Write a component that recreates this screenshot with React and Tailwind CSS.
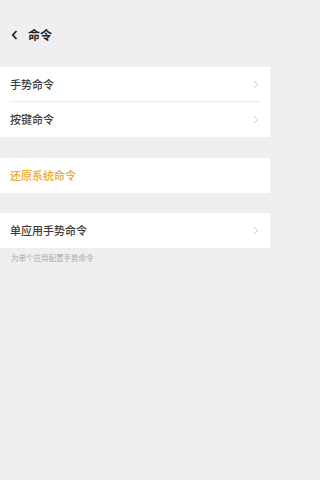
import React from 'react';

const font = { fontFamily: '"Noto Sans CJK SC", "Noto Sans", sans-serif' };

function Chevron() {
  return (
    <svg width="6" height="9" viewBox="0 0 6 9" className="shrink-0">
      <path d="M1 1l3.5 3.5L1 8" fill="none" stroke="#c8c8c8" strokeWidth="1" />
    </svg>
  );
}

function Row({ label, divider, color = 'text-[#3c3c3c]', arrow = true }) {
  return (
    <div className="relative h-[35px] flex items-center justify-between pl-[10px] pr-[11px]">
      <span className={`text-[11px] font-medium leading-none ${color}`}>{label}</span>
      {arrow && <Chevron />}
      {divider && <div className="absolute bottom-0 left-[10px] right-[10px] h-px bg-[#ebebeb]" />}
    </div>
  );
}

export default function App() {
  return (
    <div className="w-full min-h-screen bg-[#efefef]" style={font}>
      <div className="w-[270px] h-[480px] overflow-hidden">
        <div className="h-[67px] flex items-center pl-[11px] pt-[3px] gap-[10px]">
          <svg width="7" height="10" viewBox="0 0 7 10">
            <path d="M5.5 1L1.8 5l3.7 4" fill="none" stroke="#222" strokeWidth="1.8" />
          </svg>
          <span className="text-[12px] font-semibold text-[#222] leading-none">命令</span>
        </div>

        <div className="bg-white">
          <Row label="手势命令" divider />
          <Row label="按键命令" />
        </div>

        <div className="mt-[21px] bg-white">
          <Row label="还原系统命令" color="text-[#f0a830]" arrow={false} />
        </div>

        <div className="mt-[20px] bg-white">
          <Row label="单应用手势命令" />
        </div>
        <p className="pl-[11px] mt-[6px] text-[7.5px] text-[#a8a8a8] leading-none">为单个应用配置手势命令</p>
      </div>
    </div>
  );
}
